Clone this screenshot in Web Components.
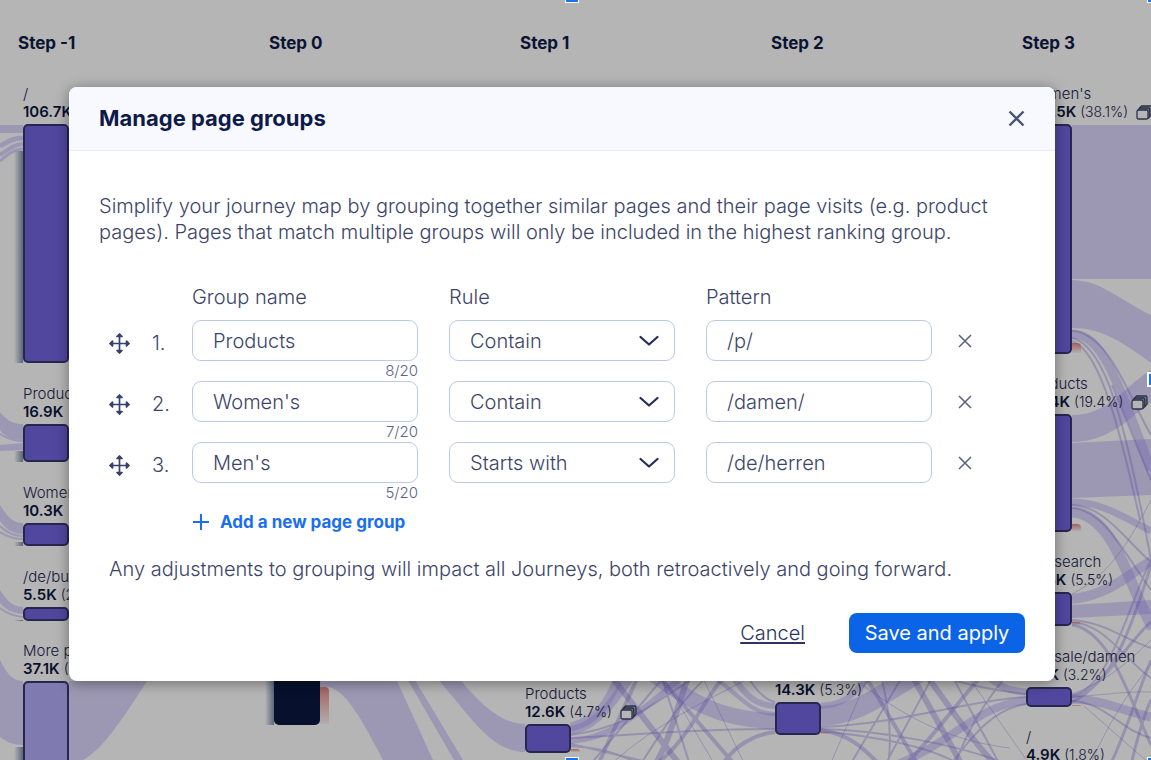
<!DOCTYPE html>
<html lang="en">
<head>
<meta charset="utf-8">
<title>Manage page groups</title>
<style>
  body { margin: 0; font-family: Inter, "Noto Sans", sans-serif; color: #1b2754; background: #fff; }
</style>
</head>
<body>
<journey-app></journey-app>

<template id="app-tpl">
  <style>
    :host { display: block; position: relative; min-height: 100vh; overflow: hidden; }
    .overlay {
      position: absolute; inset: 0; box-sizing: border-box;
      padding: 87px 96px 40px 69px; background: rgba(0, 0, 0, .29);
    }
    .handle { position: absolute; box-sizing: border-box; width: 14px; height: 8px; background: #1a73e8; border: 1px solid #fff; }
    .top { top: -5px; }
    .bottom { bottom: -5px; }
    .mid { left: 565px; }
    .end { right: -10px; }
    .side { right: -6px; top: 372px; width: 10px; height: 15px; border-width: 2px; }
  </style>
  <journey-map></journey-map>
  <div class="overlay"><groups-dialog></groups-dialog></div>
  <span class="handle top mid"></span><span class="handle top end"></span><span class="handle side"></span><span class="handle bottom mid"></span><span class="handle bottom end"></span>
</template>

<template id="map-tpl">
  <style>
    :host { display: block; position: absolute; inset: 0; overflow: hidden; }
    header {
      display: grid; grid-template-columns: repeat(4, 251fr) 129fr; position: relative;
      padding: 32px 0 0 18px; font-size: 17px; line-height: 22px; font-weight: 700; color: #101c48;
    }
    svg { position: absolute; inset: 0; width: 100%; height: 100%; }
    .f { fill: #9b8af9; fill-opacity: .35; }
    .s { fill: none; stroke: #9b8af9; stroke-opacity: .35; }
    .t { fill: none; stroke: #7868e0; stroke-opacity: .32; }
    journey-node { position: absolute; }
  </style>
  <svg aria-hidden="true">
    <g class="f">
      <path d="M0 125H23V133H0Z"/>
      <path d="M0 412C8 422 14 424 23 424V440C12 440 4 436 0 430Z"/>
      <path d="M0 445L23 443V450L0 451Z"/>
      <path d="M0 505C8 518 14 523 23 523V534C12 534 5 528 0 521Z"/>
      <path d="M0 590C8 602 14 607 23 607V614C12 613 5 609 0 603Z"/>
      <path d="M0 660C8 676 14 681 23 681V745C14 745 6 742 0 737Z"/>
      <path d="M69 681H147C122 720 102 750 83 760H69Z"/>
      <path d="M320 670H392L433 760H383C362 720 345 688 327 687H320Z"/>
      <path d="M402 670L454 760H463L409 670Z"/>
      <path d="M430 670C470 715 490 752 525 752V724C500 724 478 702 452 670Z"/>
      <path d="M1072 125H1151V279H1072Z"/>
      <path d="M1072 280C1100 280 1120 300 1151 315V363C1120 340 1100 328 1072 328Z"/>
      <path d="M1072 415C1110 415 1125 385 1151 370V402C1130 417 1110 442 1072 442Z"/>
      <path d="M1072 443L1151 439V495L1072 498Z"/>
      <path d="M1072 605L1151 600V614L1072 618Z"/>
    </g>
    <g class="s">
      <path stroke-width="5" d="M23 138C12 138 8 142 0 146"/>
      <path stroke-width="4" d="M23 144C12 145 8 150 0 155"/>
      <path stroke-width="3" d="M23 149C14 149 8 154 0 161"/>
      <path stroke-width="2" d="M23 441C14 441 8 439 0 434M23 536C14 536 6 532 0 526M23 539C14 539 6 536 0 532M23 617C14 616 6 613 0 608"/>
      <path stroke-width="16" d="M640 665C690 700 715 720 775 721"/>
      <path stroke-width="6" d="M732 675C745 695 755 705 775 706"/>
      <path stroke-width="4" d="M705 670C740 695 750 714 775 714"/>
      <path stroke-width="9" d="M571 730C595 728 615 700 635 670"/>
      <path stroke-width="6" d="M571 741C620 738 650 700 690 672"/>
      <path stroke-width="20" d="M821 716C860 714 880 695 920 672"/>
      <path stroke-width="6" d="M821 706C850 704 855 690 875 672"/>
      <path stroke-width="8" d="M895 765C950 745 980 703 1026 701"/>
      <path stroke-width="7" d="M980 670C1000 688 1010 691 1026 692"/>
      <path stroke-width="9" d="M571 727C600 720 610 700 622 670"/>
      <path stroke-width="9" d="M1072 334C1100 334 1115 372 1151 470"/>
      <path stroke-width="7" d="M1072 502C1100 502 1120 515 1151 531"/>
      <path stroke-width="11" d="M1072 512C1115 514 1130 590 1153 628"/>
      <path stroke-width="10" d="M1072 599C1110 595 1130 573 1151 561"/>
      <path stroke-width="9" d="M1072 699C1100 699 1120 710 1151 717"/>
    </g>
    <g class="t">
      <path stroke-width="6" d="M608 672L680 765M690 672C676 710 670 740 655 765M910 672L962 765M924 672C955 715 980 750 996 765"/>
      <path stroke-width="4" d="M655 672L735 765M598 765L640 672M728 672C705 695 690 740 655 765M863 672L918 765M985 672C955 705 935 735 905 765M775 732C755 734 735 745 722 765M821 730C850 734 865 750 880 765"/>
      <path stroke-width="2" d="M571 738C620 736 690 729 775 729M571 744L660 765M571 746C605 748 625 756 640 765M571 735C640 725 660 695 705 672M590 765L668 672M640 765C660 735 680 700 712 672M660 672L690 765M821 727C900 724 970 700 1026 697M821 729C880 730 960 745 1010 765M821 731C870 736 930 745 960 765M850 765L905 672M885 765L935 672M880 672C890 710 892 740 888 765M950 672L1000 765M1026 704C990 710 970 740 950 765M1026 694C990 690 960 684 930 672M1010 672C985 700 965 735 955 765M745 672C755 690 765 700 775 702"/>
      <path stroke-width="1" d="M610 765C660 720 710 700 760 672M700 672L745 765M715 765L660 672M830 765L870 672M965 672L1030 765M845 672C895 710 940 740 1010 748"/>
      <path stroke-width="2" d="M1072 331C1110 333 1130 400 1151 435M1072 338C1105 345 1125 420 1151 560M1072 341C1100 350 1120 430 1140 520M1112 385C1125 415 1138 450 1151 480M1072 505C1105 506 1125 540 1151 562M1072 508C1105 510 1125 555 1151 590M1072 620C1105 622 1125 640 1151 648M1072 622C1105 624 1125 660 1151 678M1072 695C1110 690 1130 600 1151 560M1072 701C1105 702 1120 730 1151 738"/>
      <path stroke-width="3" d="M1072 697C1105 690 1125 650 1151 565M1072 625C1110 630 1130 700 1151 745M1072 702C1100 690 1130 640 1151 622M1110 765C1125 735 1135 700 1151 660M1131 765C1138 735 1144 715 1151 700"/>
      <path stroke-width="1" d="M1072 594C1110 575 1130 540 1151 500M1072 697C1105 695 1125 691 1151 692M1090 765C1110 720 1130 690 1151 664M1072 694C1110 680 1130 660 1151 640M1084 706L1151 765"/>
    </g>
  </svg>
  <header><span>Step -1</span><span>Step 0</span><span>Step 1</span><span>Step 2</span><span>Step 3</span></header>
</template>

<template id="node-tpl">
  <style>
    :host { display: block; width: 46px; }
    .label { position: absolute; left: 0; bottom: 100%; padding-bottom: 3px; font-size: 15px; line-height: 18px; font-weight: 300; white-space: nowrap; color: #1e2750; }
    .row { display: flex; align-items: center; gap: 4px; font-size: 14px; }
    b { font-size: 15px; font-weight: 600; color: #0d1740; }
    .row svg { margin-left: 4px; }
    .bar { box-sizing: border-box; border: 2px solid #383670; border-radius: 5px; background: #7365e1; height: 100%; position: relative; }
    :host([tone="light"]) .bar { background: #b4acf8; }
    :host([tone="dark"]) .bar { background: #0a1840; border-color: #0a1840; }
    .in { position: absolute; right: 100%; bottom: 0; width: 9px; background: linear-gradient(to left, #7f92ae, rgba(127, 146, 174, 0)); }
    .out { position: absolute; left: 100%; bottom: 1px; width: 9px; border-radius: 0 4px 0 0; background: linear-gradient(#e58a86, rgba(229, 138, 134, .1)); }
  </style>
  <div class="in"></div><div class="out"></div>
  <div class="label"><div class="name"></div><div class="row"><b></b><span></span></div></div>
  <div class="bar"></div>
</template>

<template id="dialog-tpl">
  <style>
    :host { display: block; }
    section { background: #fff; border-radius: 8px; box-shadow: 0 2px 14px rgba(0, 0, 0, .4); overflow: hidden; }
    header { display: flex; align-items: center; justify-content: space-between; height: 63px; padding: 0 30px; background: #f8f9fe; border-bottom: 1px solid #e8ecf5; }
    h1 { margin: 0; font-size: 22px; line-height: 28px; font-weight: 700; color: #0e1a48; padding-bottom: 2px; }
    button { font: inherit; border: 0; background: none; padding: 0; cursor: pointer; display: flex; }
    .main { padding: 42px 30px 28px; font-size: 20px; line-height: 26px; color: #3c4569; font-weight: 300; }
    p { margin: 0; }
    .note { margin: 22px 0 31px 10px; }
    footer { display: flex; justify-content: flex-end; align-items: center; gap: 44px; }
    a { color: #2b3560; text-underline-offset: 2px; }
    .save { background: #0b63e5; color: #fff; border-radius: 8px; height: 40px; width: 176px; align-items: center; justify-content: center; font-weight: 400; }
  </style>
  <section role="dialog" aria-labelledby="title">
    <header>
      <h1 id="title">Manage page groups</h1>
      <button type="button" aria-label="Close"><svg width="17" height="17" viewBox="0 0 17 17" fill="none" stroke="#4a5378" stroke-width="2.4"><path d="M1.500 1.500L15.500 15.500M15.500 1.500L1.500 15.500"/></svg></button>
    </header>
    <div class="main">
      <p>Simplify your journey map by grouping together similar pages and their page visits (e.g. product pages). Pages that match multiple groups will only be included in the highest ranking group.</p>
      <group-list></group-list>
      <p class="note">Any adjustments to grouping will impact all Journeys, both retroactively and going forward.</p>
      <footer><a href="#">Cancel</a><button type="button" class="save">Save and apply</button></footer>
    </div>
  </section>
</template>

<template id="list-tpl">
  <style>
    :host { display: block; margin-top: 39px; }
    .line { display: flex; padding-left: 10px; }
    .drag { width: 43px; flex: none; box-sizing: border-box; padding-top: 13px; }
    .num { width: 40px; flex: none; line-height: 46px; }
    .fields { flex: 1; display: grid; grid-template-columns: repeat(3, 1fr); column-gap: 31px; }
    .end { width: 93px; flex: none; box-sizing: border-box; padding: 14px 0 0 26px; }
    .head { margin-bottom: 10px; }
    .head .drag, .head .end { padding-top: 0; }
    .head .num { line-height: 26px; }
    input, select {
      font: inherit; color: #3c4569; width: 100%; height: 41px; box-sizing: border-box; display: block;
      border: 1px solid #bccae6; border-radius: 9px; background: #fff; padding: 0 20px; outline: 0; appearance: none;
    }
    .pick { position: relative; }
    .pick svg { position: absolute; right: 16px; top: 15px; pointer-events: none; }
    .count { font-size: 15px; line-height: 20px; text-align: right; color: #5b6387; }
    button { font: inherit; border: 0; background: none; padding: 0; cursor: pointer; display: flex; }
    .add { margin: 7px 0 0 93px; align-items: center; gap: 10px; height: 24px; font-size: 17px; font-weight: 700; color: #1a6ef0; }
  </style>
  <div class="line head"><span class="drag"></span><span class="num"></span>
    <div class="fields"><label id="l-name" for="name-1">Group name</label><label id="l-rule" for="rule-1">Rule</label><label id="l-pattern" for="pattern-1">Pattern</label></div>
    <span class="end"></span></div>
  <div class="rows"></div>
  <button type="button" class="add"><svg width="18" height="18" viewBox="0 0 18 18" stroke="#1a6ef0" stroke-width="2"><path d="M9 1V17M1 9H17"/></svg>Add a new page group</button>
</template>

<script>
  class Base extends HTMLElement {
    constructor(id) {
      super();
      this.attachShadow({ mode: 'open' }).append(document.getElementById(id).content.cloneNode(true));
    }
  }

  class JourneyNode extends Base {
    constructor() { super('node-tpl'); }
    set data(d) {
      const $ = s => this.shadowRoot.querySelector(s);
      this.style.left = d.x + 'px';
      this.style.top = d.y + 'px';
      this.style.height = d.h + 'px';
      if (d.tone) this.setAttribute('tone', d.tone);
      $('.name').textContent = d.name || '';
      $('b').textContent = d.value || '';
      $('.row span').textContent = d.share || '';
      $('.in').style.height = (d.in || 0) + 'px';
      $('.out').style.height = (d.out || 0) + 'px';
      if (d.group) $('.row').insertAdjacentHTML('beforeend',
        '<svg width="17" height="15" viewBox="0 0 17 15" stroke="#3c4569" stroke-width="1.300" stroke-linejoin="round"><path fill="#a9acb8" d="M2 5L5.500 1H14.500Q16 1 16 2.500V9L12 13.500"/><path fill="none" d="M3.500 3H12Q13.800 3 13.800 5V11.500"/><rect fill="#fff" x="1" y="5" width="11" height="9" rx="1.500"/></svg>');
    }
  }

  const NODES = [
    { x: 23, y: 124, h: 239, name: '/', value: '106.7K', in: 212 },
    { x: 23, y: 424, h: 38, name: 'Products', value: '16.9K', in: 11 },
    { x: 23, y: 523, h: 23, name: "Women's", value: '10.3K', in: 4 },
    { x: 23, y: 607, h: 14, name: '/de/bu', value: '5.5K', share: '(2%)', in: 1 },
    { x: 23, y: 681, h: 110, name: 'More pages', value: '37.1K', share: '(14%)', tone: 'light', in: 44 },
    { x: 274, y: 600, h: 125, tone: 'dark', in: 125, out: 37 },
    { x: 525, y: 724, h: 29, name: 'Products', value: '12.6K', share: '(4.7%)', group: true, out: 3 },
    { x: 775, y: 702, h: 33, value: '14.3K', share: '(5.3%)', out: 2 },
    { x: 1026, y: 124, h: 230, name: "Women's", value: '102.5K', share: '(38.1%)', group: true, out: 10 },
    { x: 1026, y: 414, h: 118, name: 'Products', value: '52.4K', share: '(19.4%)', group: true, out: 7 },
    { x: 1026, y: 592, h: 34, name: '/de/search', value: '14.8K', share: '(5.5%)', out: 3 },
    { x: 1026, y: 687, h: 20, name: '/de/sale/damen', value: '8.7K', share: '(3.2%)', out: 1 },
    { x: 1026, y: 767, h: 14, name: '/', value: '4.9K', share: '(1.8%)' }
  ];

  class JourneyMap extends Base {
    constructor() {
      super('map-tpl');
      for (const d of NODES) {
        const n = document.createElement('journey-node');
        n.data = d;
        this.shadowRoot.append(n);
      }
    }
  }

  class GroupList extends Base {
    constructor() {
      super('list-tpl');
      const rows = this.shadowRoot.querySelector('.rows');
      const groups = [['Products', 'Contain', '/p/'], ["Women's", 'Contain', '/damen/'], ["Men's", 'Starts with', '/de/herren']];
      groups.forEach(([name, rule, pattern], i) => {
        const n = i + 1;
        const row = document.createElement('div');
        row.className = 'line';
        row.innerHTML = `
          <span class="drag"><svg width="21" height="21" viewBox="0 0 21 21" fill="none" stroke="#37426b" stroke-width="1.700" stroke-linecap="round" stroke-linejoin="round"><path d="M10.500 1.500V19.500M1.500 10.500H19.500"/><path fill="#37426b" d="M8 3.500L10.500 1L13 3.500ZM8 17.500L10.500 20L13 17.500ZM3.500 8L1 10.500L3.500 13ZM17.500 8L20 10.500L17.500 13Z"/></svg></span>
          <span class="num">${n}.</span>
          <div class="fields">
            <div><input type="text" id="name-${n}" aria-labelledby="l-name" maxlength="20" value="${name}"><div class="count">${name.length}/20</div></div>
            <div class="pick"><select id="rule-${n}" aria-labelledby="l-rule"><option>${rule}</option></select>
              <svg width="20" height="12" viewBox="0 0 20 12" fill="none" stroke="#222d5a" stroke-width="2.200" stroke-linecap="round" stroke-linejoin="round"><path d="M1.500 2L10 9.500L18.500 2"/></svg></div>
            <div><input type="text" id="pattern-${n}" aria-labelledby="l-pattern" value="${pattern}"></div>
          </div>
          <span class="end"><button type="button" aria-label="Remove group ${n}"><svg width="14" height="14" viewBox="0 0 14 14" fill="none" stroke="#566083" stroke-width="1.500"><path d="M1 1L13 13M13 1L1 13"/></svg></button></span>`;
        const input = row.querySelector('input');
        input.addEventListener('input', () => { row.querySelector('.count').textContent = input.value.length + '/20'; });
        rows.append(row);
      });
    }
  }

  customElements.define('journey-node', JourneyNode);
  customElements.define('journey-map', JourneyMap);
  customElements.define('group-list', GroupList);
  customElements.define('groups-dialog', class extends Base { constructor() { super('dialog-tpl'); } });
  customElements.define('journey-app', class extends Base { constructor() { super('app-tpl'); } });
</script>
</body>
</html>
